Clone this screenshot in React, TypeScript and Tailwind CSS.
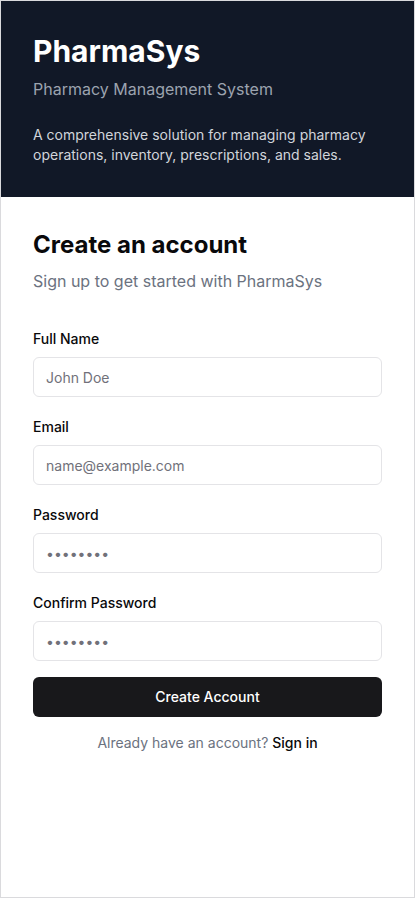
const fields = [
    { name: "fullName", label: "Full Name", type: "text", placeholder: "John Doe" },
    { name: "email", label: "Email", type: "email", placeholder: "name@example.com" },
    { name: "password", label: "Password", type: "password", placeholder: "••••••••" },
    { name: "confirmPassword", label: "Confirm Password", type: "password", placeholder: "••••••••" },
];

export default function App() {
    return (
        <div className="flex h-[898px] w-full flex-col border border-[#dadadd] bg-white font-['Inter',sans-serif] text-[#09090b]">
            <header className="bg-[#111827] p-8 text-white">
                <h1 className="text-3xl leading-9 font-bold">PharmaSys</h1>
                <p className="mt-2 text-base text-[#9ca3af]">Pharmacy Management System</p>
                <p className="mt-6 text-sm leading-5 text-[#d1d5db]">
                    A comprehensive solution for managing pharmacy operations, inventory, prescriptions, and sales.
                </p>
            </header>
            <main className="p-8">
                <h2 className="text-2xl leading-8 font-bold">Create an account</h2>
                <p className="mt-2 text-base text-[#6b7280]">Sign up to get started with PharmaSys</p>
                <form
                    className="mt-9 flex flex-col"
                    onSubmit={(e) => {
                        e.preventDefault();
                    }}
                >
                    <div className="flex flex-col gap-5">
                        {fields.map((f) => (
                            <label key={f.name} className="block">
                                <span className="mb-2 block text-sm leading-5 font-medium">{f.label}</span>
                                <input
                                    type={f.type}
                                    name={f.name}
                                    placeholder={f.placeholder}
                                    className="h-10 w-full rounded-md border border-[#e4e4e7] bg-white px-3 text-sm outline-none placeholder:text-[#71717a]"
                                />
                            </label>
                        ))}
                    </div>
                    <button
                        type="submit"
                        className="mt-4 h-10 w-full rounded-md bg-[#18181b] text-sm font-medium text-white"
                    >
                        Create Account
                    </button>
                    <p className="mt-4 text-center text-sm leading-5 text-[#6b7280]">
                        Already have an account? <span className="font-medium text-[#09090b]">Sign in</span>
                    </p>
                </form>
            </main>
        </div>
    );
}
